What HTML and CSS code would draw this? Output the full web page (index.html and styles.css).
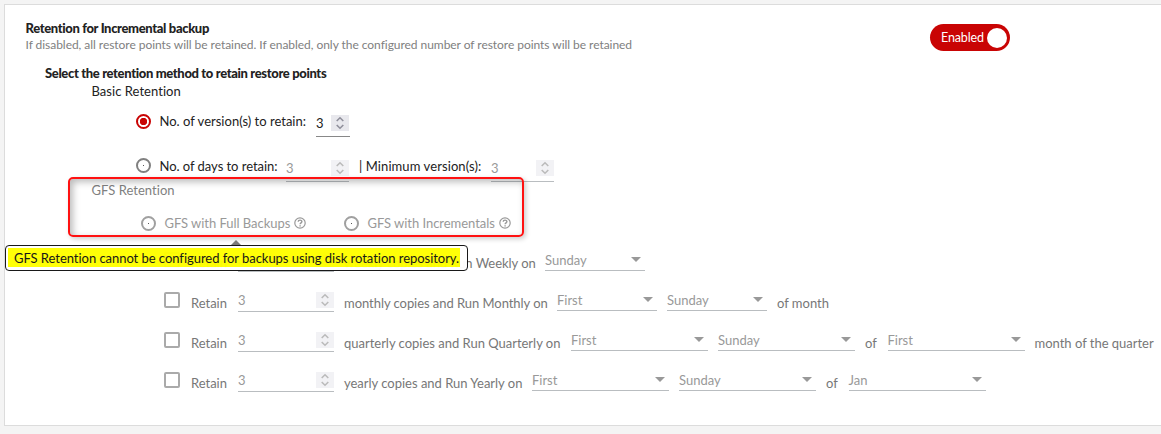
FILE: index.html
```html
<!DOCTYPE html>
<html lang="en">
<head>
<meta charset="utf-8">
<title>Retention settings</title>
<link rel="stylesheet" href="styles.css">
</head>
<body>
<svg class="defs" width="0" height="0" aria-hidden="true">
  <symbol id="spin" viewBox="0 0 18 16"><path d="M5.7 6 9 2.8 12.3 6M5.7 10 9 13.2 12.3 10" fill="none" stroke="currentColor" stroke-width="1.6"/></symbol>
  <symbol id="help" viewBox="0 0 12 12"><circle cx="6" cy="6" r="5.2" fill="none" stroke="currentColor" stroke-width="1.2"/><path d="M4.2 4.7C4.2 2.6 7.9 2.6 7.9 4.6 7.9 5.8 6.1 5.9 6.1 7.3M6.1 8.2V9.4" fill="none" stroke="currentColor" stroke-width="1.4"/></symbol>
</svg>
<main class="card">
  <header class="head">
    <div>
      <h2 class="title">Retention for Incremental backup</h2>
      <p class="desc">If disabled, all restore points will be retained. If enabled, only the configured number of restore points will be retained</p>
    </div>
    <div class="toggle"><span class="toggle-label">Enabled</span><span class="knob"></span></div>
  </header>
  <h3 class="subtitle">Select the retention method to retain restore points</h3>
  <p class="group">Basic Retention</p>
  <div class="row versions">
    <span class="radio on"></span><span class="label t-versions">No. of version(s) to retain:</span>
    <span class="num low active narrow"><span>3</span><svg class="spin"><use href="#spin"/></svg></span>
  </div>
  <div class="row days">
    <span class="radio"></span><span class="label t-days">No. of days to retain:</span>
    <span class="num low medium"><span>3</span><svg class="spin"><use href="#spin"/></svg></span>
    <span class="label t-min">| Minimum version(s):</span>
    <span class="num low medium"><span>3</span><svg class="spin"><use href="#spin"/></svg></span>
  </div>
  <p class="group muted">GFS Retention</p>
  <div class="row gfs">
    <span class="radio dim"></span><span class="label t-full">GFS with Full Backups</span><svg class="help"><use href="#help"/></svg>
    <span class="radio dim second"></span><span class="label t-inc">GFS with Incrementals</span><svg class="help"><use href="#help"/></svg>
  </div>
  <div class="row copies">
    <span class="check"></span><span class="text t-retain">Retain</span><span class="num"><span>3</span><svg class="spin"><use href="#spin"/></svg></span>
    <span class="text t-weekly">weekly copies and Run Weekly on</span><span class="select">Sunday</span>
  </div>
  <div class="row copies">
    <span class="check"></span><span class="text t-retain">Retain</span><span class="num"><span>3</span><svg class="spin"><use href="#spin"/></svg></span>
    <span class="text t-monthly">monthly copies and Run Monthly on</span><span class="select">First</span><span class="select">Sunday</span><span class="text">of month</span>
  </div>
  <div class="row copies">
    <span class="check"></span><span class="text t-retain">Retain</span><span class="num"><span>3</span><svg class="spin"><use href="#spin"/></svg></span>
    <span class="text t-quarterly">quarterly copies and Run Quarterly on</span><span class="select wide">First</span><span class="select wide">Sunday</span><span class="text t-of">of</span><span class="select wide">First</span><span class="text t-quarter">month of the quarter</span>
  </div>
  <div class="row copies">
    <span class="check"></span><span class="text t-retain">Retain</span><span class="num"><span>3</span><svg class="spin"><use href="#spin"/></svg></span>
    <span class="text t-yearly">yearly copies and Run Yearly on</span><span class="select wide">First</span><span class="select wide">Sunday</span><span class="text t-of">of</span><span class="select wide">Jan</span>
  </div>
  <div class="highlight"></div>
  <div class="tooltip"><span class="tooltip-text">GFS Retention cannot be configured for backups using disk rotation repository.</span></div>
</main>
</body>
</html>
```
FILE: styles.css
```css
* { box-sizing: border-box; }
body { margin: 0; height: 434px; padding: 4px 0 0 4px; overflow: hidden; background: #f4f4f4; font: 13px/18px Lato, "Liberation Sans", sans-serif; letter-spacing: -0.01px; color: #222; white-space: nowrap; }
.defs { position: absolute; }
h2, h3, p { margin: 0; }
.card { position: relative; height: 422px; border: 1px solid #dcdcdc; border-right: 0; background: #fff; }
.head { display: flex; padding: 14px 0 0 20.5px; height: 59px; }
.head > div:first-child { width: 904.5px; }
.title { font-size: 13px; line-height: 18px; font-weight: 900; letter-spacing: -0.35px; }
.desc { font-size: 12px; line-height: 16px; letter-spacing: -0.045px; color: #808080; }
.toggle { display: flex; align-items: center; justify-content: space-between; width: 80px; height: 27px; margin-top: 5px; padding: 0 3px 0 11px; border-radius: 14px; background: #c90404; color: #fff; }
.toggle-label { font-size: 12.5px; letter-spacing: -0.15px; }
.knob { width: 20px; height: 20px; border-radius: 50%; background: #fff; }
.subtitle { margin-left: 40px; font-size: 13px; line-height: 18px; font-weight: 900; letter-spacing: -0.35px; }
.group { margin-left: 86.5px; line-height: 18px; letter-spacing: 0.04px; }
.muted { color: #808080; }
.row { display: flex; align-items: center; }
.versions { height: 42px; padding-left: 131px; }
.days { height: 39px; padding: 8px 0 0 131px; }
.gfs { height: 44px; padding: 4px 0 0 136px; color: #999; }
.radio { flex: none; width: 15px; height: 15px; margin-right: 8.5px; border: 2px solid #808080; border-radius: 50%; background: radial-gradient(circle, #555 0 .7px, transparent 1px); }
.radio.on { border-color: #c90404; background: radial-gradient(circle, #c90404 0 3.4px, #fff 4px); }
.radio.dim { border-color: #a0a0a0; }
.radio.second { margin-left: 38px; }
.help { width: 12px; height: 12px; margin-left: 4px; color: #999; }
.label { letter-spacing: -0.04px; }
.t-versions { width: 156.5px; letter-spacing: 0.01px; }
.t-days { width: 126.5px; }
.t-min { width: 122px; margin: 0 10px; letter-spacing: 0.09px; }
.t-full { width: 125.5px; }
.t-inc { width: 127.5px; }
.num { display: flex; flex: none; align-items: center; justify-content: space-between; width: 96px; height: 20px; margin-bottom: 2px; padding-bottom: 3px; border-bottom: 1px solid #b9bdc0; color: #999; }
.num.low { height: 22px; margin: 10px 0 0; padding-bottom: 5px; }
.num.narrow { width: 34px; padding-right: 1px; }
.num.medium { width: 63px; }
.num.active { color: #222; border-color: #888; }
.spin { width: 18px; height: 16px; background: #f2f2f5; color: #bbb; }
.active .spin { background: #e8e8ed; color: #8f8f9b; }
.copies { height: 40px; padding-left: 159px; color: #777; }
.check { width: 16px; height: 16px; margin-bottom: 6px; border: 2px solid #aaa; border-radius: 2px; }
.t-retain { width: 37px; margin: 0 10px 0 11px; }
.text { flex: none; }
.t-weekly { width: 191px; margin: 0 10px; letter-spacing: -0.05px; }
.t-monthly { width: 203px; margin: 0 10px; letter-spacing: -0.05px; }
.t-quarterly { width: 217px; margin: 0 10px; }
.t-yearly { width: 178px; margin: 0 10px; }
.t-of { width: 12.5px; margin-right: 10px; }
.select { display: flex; flex: none; justify-content: space-between; width: 100px; height: 20px; margin: 0 10px 4px 0; padding-right: 4px; border-bottom: 1px solid #b9bdc0; color: #999; }
.select.wide { width: 137px; }
.select::after { content: ""; margin-top: 6px; width: 0; height: 0; border: 5px solid transparent; border-top-color: #999; border-bottom: 0; }
.highlight { position: absolute; left: 63px; top: 172px; width: 456px; height: 60px; border: 2px solid #f11; border-radius: 5px; box-shadow: 2px 2px 5px #0003, inset 3px 3px 7px #0004; }
.tooltip { position: absolute; left: 0; top: 240px; width: 463px; height: 26px; padding: 2px; border: 1px solid #111; border-radius: 4px; background: #fff; opacity: .97; color: #111; letter-spacing: -0.04px; }
.tooltip::before { content: ""; position: absolute; left: 225px; top: -6px; border: 5px solid transparent; border-bottom-color: #777; border-top: 0; }
.tooltip-text { display: block; width: 452px; height: 19px; padding-left: 6px; line-height: 20px; background: #ff0; }
```
